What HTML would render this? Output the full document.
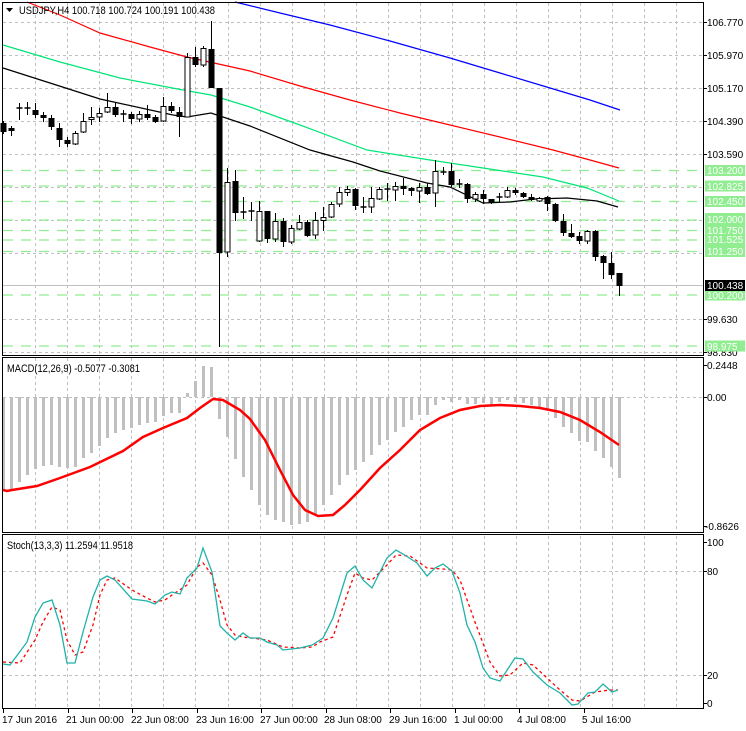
<!DOCTYPE html>
<html><head><meta charset="utf-8"><style>
html,body{margin:0;padding:0;background:#fff;width:746px;height:731px;overflow:hidden}
svg{display:block;font-family:"Liberation Sans",sans-serif}
</style></head><body>
<svg width="746" height="731" viewBox="0 0 746 731" xmlns="http://www.w3.org/2000/svg">
<rect width="746" height="731" fill="#fff"/>
<g stroke="#c0c0c0" stroke-dasharray="3,3" stroke-width="1">
<path d="M35.5 3V354M67.5 3V354M99.5 3V354M131.5 3V354M163.5 3V354M195.5 3V354M228.5 3V354M260.5 3V354M292.5 3V354M324.5 3V354M356.5 3V354M388.5 3V354M420.5 3V354M452.5 3V354M484.5 3V354M516.5 3V354M548.5 3V354M580.5 3V354M612.5 3V354M644.5 3V354M676.5 3V354"/>
<path d="M35.5 358V532M67.5 358V532M99.5 358V532M131.5 358V532M163.5 358V532M195.5 358V532M228.5 358V532M260.5 358V532M292.5 358V532M324.5 358V532M356.5 358V532M388.5 358V532M420.5 358V532M452.5 358V532M484.5 358V532M516.5 358V532M548.5 358V532M580.5 358V532M612.5 358V532M644.5 358V532M676.5 358V532"/>
<path d="M35.5 536V708M67.5 536V708M99.5 536V708M131.5 536V708M163.5 536V708M195.5 536V708M228.5 536V708M260.5 536V708M292.5 536V708M324.5 536V708M356.5 536V708M388.5 536V708M420.5 536V708M452.5 536V708M484.5 536V708M516.5 536V708M548.5 536V708M580.5 536V708M612.5 536V708M644.5 536V708M676.5 536V708"/>
<path d="M3 22.5H703M3 55.5H703M3 88.5H703M3 121.5H703M3 154.5H703M3 187.5H703M3 220.5H703M3 253.5H703M3 319.5H703M3 352.5H703"/>
<path d="M3 397.5H703"/>
<path d="M3 571.5H703M3 675.5H703"/>
</g>
<g stroke="#90ee90" stroke-width="1.3" stroke-dasharray="10,8">
<path d="M3 170.5H703M3 186H703M3 201.5H703M3 220H703M3 230.5H703M3 240H703M3 251.5H703M3 295H703M3 346H703"/>
</g>
<path d="M3 285.5H703" stroke="#c0c0c0" stroke-width="1"/>
<g fill="none" stroke-width="1.2">
<polyline stroke="#0000ff" points="235,2 280,13 330,25 390,41 450,58 500,73 550,88 590,100 620,110"/>
<polyline stroke="#ff0000" points="27,2 60,15 100,33 150,47 187,57 250,71 300,86 350,100 400,113 450,125 500,137 553,150 590,160 619,168"/>
<polyline stroke="#00e676" points="3,45 60,62 120,78 183,90 211,95 250,107 300,125 367,150 430,160 483,168 503,171 543,177 587,188 619,201"/>
<polyline stroke="#000" points="3,68 50,83 100,99 173,115 187,117 211,113 250,126 310,150 353,162 380,171 427,183 450,187 483,203 510,202 535,199 567,198 597,201 618,207"/>
</g>
<path stroke="#000" stroke-width="1" fill="none" d="M3.5 121V134M11.5 126V136M19.5 103V120M27.5 102V115M35.5 103V118M43.5 112V122M51.5 115V130M59.5 123V147M67.5 137V147M75.5 131V145M83.5 113V133M91.5 107V125M99.5 108V122M107.5 93V113M115.5 103V117M123.5 110V122M131.5 112V124M139.5 111V122M147.5 105V120M155.5 115V123M163.5 97V122M171.5 102V113M179.5 107V137M187.5 53V117M195.5 47V67M203.5 46V67M211.5 21V88M219.5 88V347M227.5 168V257M235.5 170V221M243.5 197V219M251.5 202V221M259.5 201V242M267.5 211V243M275.5 213V242M283.5 218V247M291.5 225V244M299.5 215V230M307.5 220V237M315.5 212V239M323.5 207V231M331.5 202V218M339.5 187V207M347.5 186V196M355.5 188V210M363.5 197V213M371.5 187V213M379.5 187V200M387.5 183V201M395.5 182V201M403.5 178V195M411.5 187V196M419.5 183V203M427.5 183V195M435.5 160V207M443.5 167V175M451.5 163V187M459.5 179V188M467.5 183V203M475.5 192V202M483.5 190V204M491.5 199V204M499.5 193V203M507.5 187V198M515.5 188V195M523.5 192V198M531.5 194V201M539.5 197V202M547.5 196V211M555.5 203V222M563.5 214V236M571.5 224V238M579.5 232V244M587.5 230V244M595.5 230V261M603.5 255V279M611.5 252V279M619.5 273V296"/>
<path stroke="#000" stroke-width="1.5" d="M16.5 108H22.5M24.5 108H30.5M120.5 114H126.5M240.5 212H246.5M248.5 211H254.5M360.5 207H366.5M384.5 189H390.5M440.5 172H446.5M456.5 184H462.5M496.5 197H502.5"/>
<path stroke="#000" stroke-width="6" fill="none" d="M3.5 123V132M11.5 128V131M35.5 110V115M43.5 115V118M51.5 118V127M59.5 128V140M67.5 140V144M115.5 107V115M131.5 114V119M147.5 114V118M155.5 117V122M171.5 106V111M179.5 112V117M195.5 57V65M211.5 49V88M219.5 88V253M235.5 181V213M267.5 211V239M283.5 221V242M307.5 222V236M355.5 189V206M403.5 186V189M411.5 188V191M427.5 187V194M451.5 171V185M467.5 184V199M483.5 194V199M491.5 199V203M515.5 190V193M523.5 193V197M531.5 197V200M547.5 197V204M555.5 204V221M563.5 221V233M571.5 233V237M579.5 236V241M595.5 231V257M603.5 256V263M611.5 263V275M619.5 273V286"/>
<g fill="#fff" stroke="#000" stroke-width="1">
<rect x="73" y="133.5" width="5" height="10.5"/><rect x="81" y="121.5" width="5" height="10.5"/><rect x="89" y="117.5" width="5" height="2"/><rect x="97" y="113.5" width="5" height="3.5"/><rect x="105" y="107.5" width="5" height="4.5"/><rect x="137" y="114.5" width="5" height="4.5"/><rect x="161" y="106.5" width="5" height="14.5"/><rect x="185" y="57.5" width="5" height="59.5"/><rect x="201" y="48.5" width="5" height="16.5"/><rect x="225" y="182.5" width="5" height="69.5"/><rect x="257" y="211.5" width="5" height="29.5"/><rect x="273" y="221.5" width="5" height="17.5"/><rect x="289" y="228.5" width="5" height="13.5"/><rect x="297" y="222.5" width="5" height="6.5"/><rect x="313" y="220.5" width="5" height="14.5"/><rect x="321" y="217.5" width="5" height="3"/><rect x="329" y="204.5" width="5" height="12.5"/><rect x="337" y="192.5" width="5" height="11.5"/><rect x="345" y="189.5" width="5" height="3"/><rect x="369" y="198.5" width="5" height="8.5"/><rect x="377" y="189.5" width="5" height="9.5"/><rect x="393" y="186.5" width="5" height="3.5"/><rect x="417" y="187.5" width="5" height="3.5"/><rect x="433" y="171.5" width="5" height="21.5"/><rect x="473" y="194.5" width="5" height="4.5"/><rect x="505" y="190.5" width="5" height="6.5"/><rect x="537" y="198.5" width="5" height="2.5"/><rect x="585" y="231.5" width="5" height="9.5"/>
</g>
<path stroke="#c0c0c0" stroke-width="3" fill="none" d="M3.5 397V490M11.5 397V490M19.5 397V482M27.5 397V475M35.5 397V469M43.5 397V466M51.5 397V465M59.5 397V467M67.5 397V468M75.5 397V467M83.5 397V458M91.5 397V453M99.5 397V446M107.5 397V438M115.5 397V433M123.5 397V430M131.5 397V428M139.5 397V425M147.5 397V423M155.5 397V422M163.5 397V416M171.5 397V413M179.5 397V413M187.5 397V393M195.5 397V381M203.5 397V366M211.5 397V367M219.5 397V419M227.5 397V437M235.5 397V459M243.5 397V477M251.5 397V490M259.5 397V505M267.5 397V515M275.5 397V520M283.5 397V522M291.5 397V525M299.5 397V524M307.5 397V522M315.5 397V515M323.5 397V505M331.5 397V495M339.5 397V485M347.5 397V475M355.5 397V470M363.5 397V462M371.5 397V455M379.5 397V445M387.5 397V440M395.5 397V432M403.5 397V427M411.5 397V420M419.5 397V415M427.5 397V415M435.5 397V405M443.5 397V400M451.5 397V402M459.5 397V400M467.5 397V404M475.5 397V404M483.5 397V403M491.5 397V405M499.5 397V402M507.5 397V400M515.5 397V402M523.5 397V403M531.5 397V405M539.5 397V407M547.5 397V410M555.5 397V418M563.5 397V427M571.5 397V433M579.5 397V441M587.5 397V442M595.5 397V451M603.5 397V458M611.5 397V467M619.5 397V478"/>
<polyline fill="none" stroke="#ff0000" stroke-width="2.5" points="3,490 7,491 12,490 37,486 60,478 90,467 123,451 143,437 163,428 187,418 200,408 213,399 223,400 240,410 250,419 265,440 280,470 293,495 305,510 318,516 333,515 345,505 360,490 380,468 400,450 420,430 440,418 460,410 480,406 500,405 520,406 540,408 560,412 580,420 600,432 619,445"/>
<polyline fill="none" stroke="#ff0000" stroke-width="1.3" stroke-dasharray="3,3" points="3,662 20,663 35,640 43,622 52,607 60,610 67,640 75,655 83,652 93,625 100,595 107,580 115,578 132,590 147,598 155,602 165,600 172,595 187,585 197,567 203,563 212,575 220,600 227,625 235,635 243,637 267,640 283,647 300,648 312,647 320,642 333,637 347,595 355,573 363,578 372,580 387,565 396,555 410,556 427,568 443,569 452,570 460,580 475,622 490,662 500,676 510,675 523,663 533,665 547,678 560,690 572,700 580,701 595,692 610,690 618,690"/>
<polyline fill="none" stroke="#20b2aa" stroke-width="1.3" points="3,664 10,665 27,642 35,617 43,603 52,600 60,625 67,663 75,663 83,632 93,597 100,580 107,576 115,580 132,599 147,601 155,604 165,595 172,592 180,594 187,578 197,568 203,548 212,572 220,626 227,633 235,640 243,633 250,638 260,638 267,642 277,645 283,650 300,648 312,645 320,640 323,638 333,618 347,573 355,566 363,580 372,588 387,558 396,550 403,554 417,563 427,576 435,568 443,564 452,571 460,593 467,625 475,642 483,668 490,678 500,681 515,658 523,659 533,672 547,685 560,693 572,705 578,704 588,693 595,692 603,684 612,692 618,690"/>
<g fill="none" stroke="#000" stroke-width="1">
<path d="M2.5 2.5H703.5V355.5H2.5Z"/>
<path d="M2.5 357.5H703.5V532.5H2.5Z"/>
<path d="M2.5 534.5H703.5V708.5H2.5Z"/>
<path d="M3.5 709V713M68.5 709V713M132.5 709V713M197.5 709V713M261.5 709V713M326.5 709V713M390.5 709V713M455.5 709V713M519.5 709V713M584.5 709V713"/>
<path d="M703 22.5H707M703 55.5H707M703 88.5H707M703 121.5H707M703 154.5H707M703 319.5H707M703 352.5H707M703 365.5H707M703 397.5H707M703 526.5H707M703 542.5H707M703 571.5H707M703 675.5H707M703 703.5H707"/>
</g>
<g font-size="10" fill="#000">
<text x="707" y="26">106.770</text><text x="707" y="59">105.970</text><text x="707" y="92">105.170</text><text x="707" y="125">104.390</text><text x="707" y="158">103.590</text><text x="707" y="323">99.630</text><text x="707" y="356">98.830</text>
<text x="707" y="369">0.2448</text><text x="707" y="401">0.00</text><text x="705" y="530">-0.8626</text>
<text x="707" y="546">100</text><text x="707" y="575">80</text><text x="707" y="679">20</text><text x="707" y="707">0</text>
</g>
<g fill="#90ee90">
<rect x="705" y="165" width="40" height="11"/><rect x="705" y="180.5" width="40" height="11"/><rect x="705" y="196" width="40" height="11"/><rect x="705" y="213" width="40" height="44"/><rect x="705" y="289.5" width="40" height="11"/><rect x="705" y="340.5" width="40" height="11"/>
</g>
<rect x="705" y="280" width="40" height="11" fill="#000"/>
<g font-size="10" fill="#fff">
<text x="707" y="174">103.200</text><text x="707" y="190">102.825</text><text x="707" y="205">102.450</text><text x="707" y="223">102.000</text><text x="707" y="234">101.750</text><text x="707" y="243">101.525</text><text x="707" y="255">101.250</text><text x="707" y="289">100.438</text><text x="707" y="299">100.200</text><text x="707" y="350">98.975</text>
</g>
<path d="M6 8H13L9.5 12Z" fill="#000"/>
<text x="19" y="14" font-size="11" fill="#000" textLength="196" lengthAdjust="spacingAndGlyphs">USDJPY,H4 100.718 100.724 100.191 100.438</text>
<text x="7" y="372" font-size="11" fill="#000" textLength="133" lengthAdjust="spacingAndGlyphs">MACD(12,26,9) -0.5077 -0.3081</text>
<text x="7" y="549" font-size="11" fill="#000" textLength="126" lengthAdjust="spacingAndGlyphs">Stoch(13,3,3) 11.2594 11.9518</text>
<g font-size="10" fill="#000">
<text x="2" y="723">17 Jun 2016</text><text x="66" y="723">21 Jun 00:00</text><text x="131" y="723">22 Jun 08:00</text><text x="196" y="723">23 Jun 16:00</text><text x="260" y="723">27 Jun 00:00</text><text x="324" y="723">28 Jun 08:00</text><text x="389" y="723">29 Jun 16:00</text><text x="454" y="723">1 Jul 00:00</text><text x="517" y="723">4 Jul 08:00</text><text x="582" y="723">5 Jul 16:00</text>
</g>
</svg>
</body></html>
